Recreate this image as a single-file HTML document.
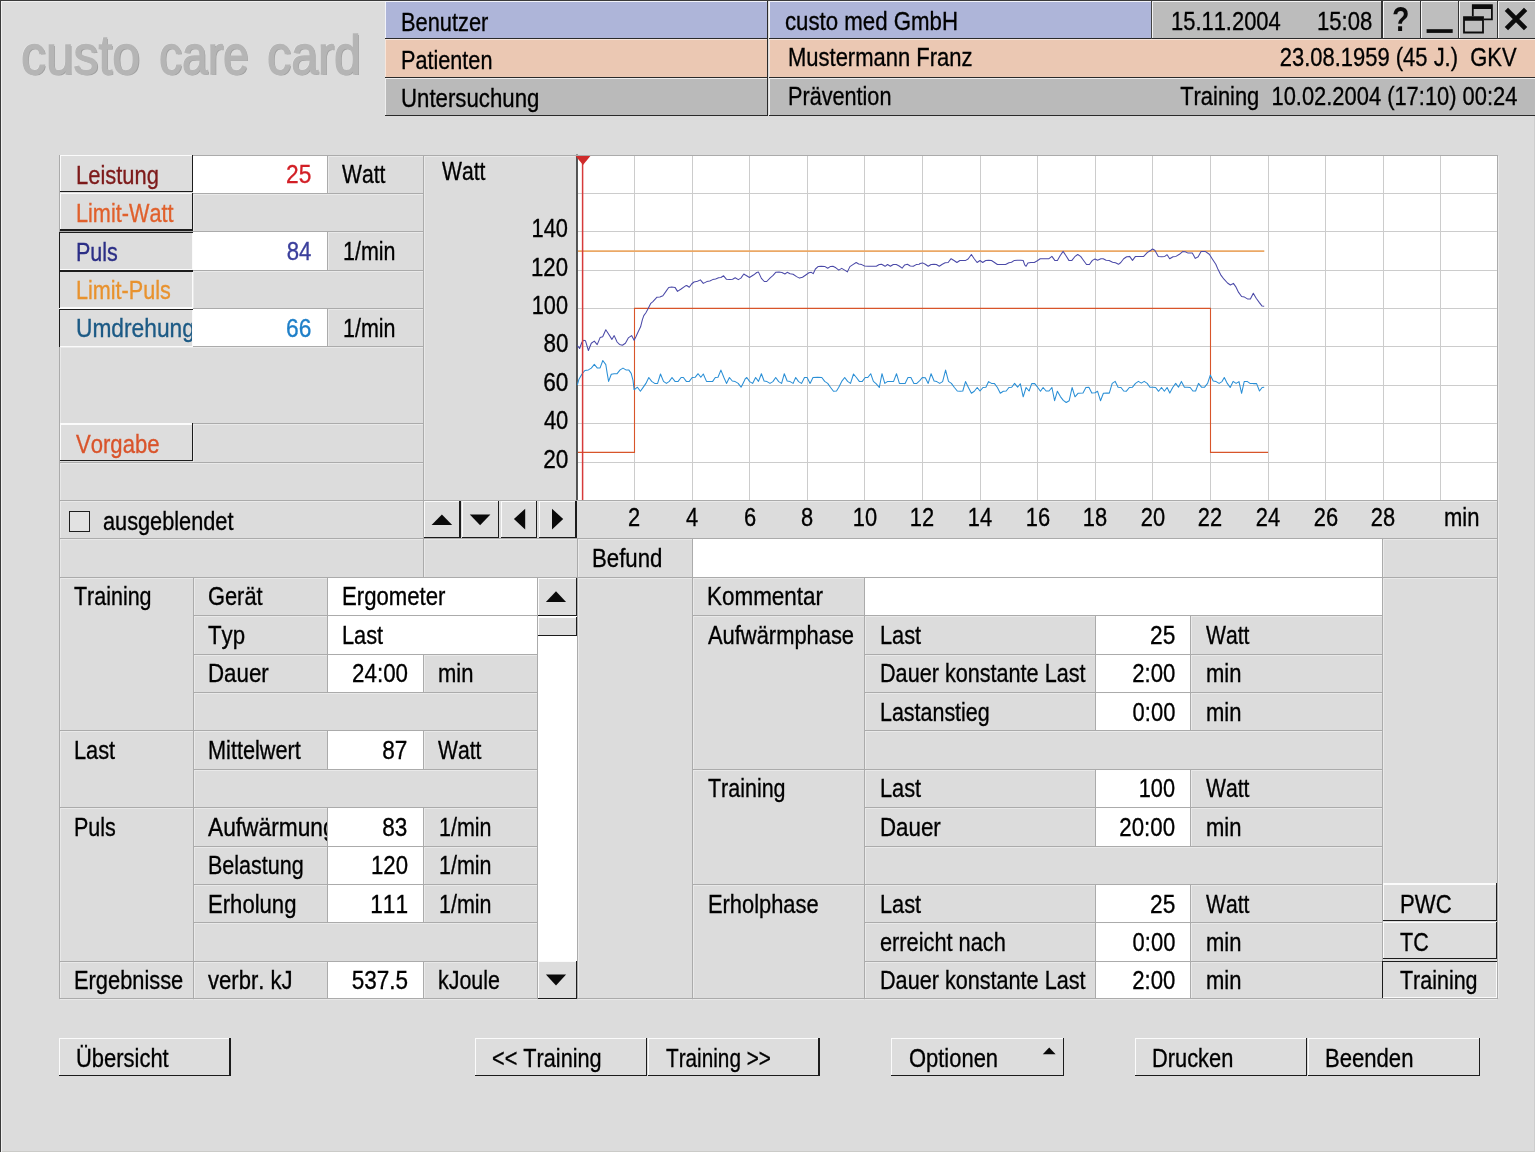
<!DOCTYPE html>
<html lang="de"><head><meta charset="utf-8"><title>custo care card</title>
<style>
html,body{margin:0;padding:0;background:#dcdcdc;}
body{width:1535px;height:1152px;overflow:hidden;position:relative;font-family:"Liberation Sans",sans-serif;}
#app{position:absolute;left:0;top:0;width:1535px;height:1152px;overflow:hidden;will-change:transform;font-kerning:none;}
#app div{position:absolute;}
#app svg{position:absolute;}
.t{position:absolute;white-space:nowrap;font-size:26.4px;line-height:30px;color:#000;-webkit-text-stroke:0.35px currentColor;transform:scaleX(0.828);transform-origin:0 50%;}
.t.r{transform-origin:100% 50%;}
.logo{position:absolute;white-space:nowrap;font-weight:normal;transform-origin:0 50%;color:#b5b5b5;-webkit-text-stroke:1.4px #b5b5b5;text-shadow:1.5px 1.2px 0 #a0a0a0,-1px -0.8px 0.6px #e6e6e6;}
</style></head>
<body><div id="app">
<div style="left:59.6px;top:155.5px;width:363.3px;height:1px;background:#e9e9e9;"></div>
<div style="left:59.6px;top:193.89px;width:363.3px;height:1px;background:#e9e9e9;"></div>
<div style="left:59.6px;top:232.28px;width:363.3px;height:1px;background:#e9e9e9;"></div>
<div style="left:59.6px;top:270.67px;width:363.3px;height:1px;background:#e9e9e9;"></div>
<div style="left:59.6px;top:309.06px;width:363.3px;height:1px;background:#e9e9e9;"></div>
<div style="left:59.6px;top:347.45px;width:363.3px;height:1px;background:#e9e9e9;"></div>
<div style="left:59.6px;top:424.23px;width:363.3px;height:1px;background:#e9e9e9;"></div>
<div style="left:59.6px;top:462.62px;width:363.3px;height:1px;background:#e9e9e9;"></div>
<div style="left:59.6px;top:501.01px;width:363.3px;height:1px;background:#e9e9e9;"></div>
<div style="left:59.6px;top:539.4px;width:363.3px;height:1px;background:#e9e9e9;"></div>
<div style="left:59.6px;top:577.79px;width:363.3px;height:1px;background:#e9e9e9;"></div>
<div style="left:423.9px;top:155.5px;width:152.7px;height:1px;background:#e9e9e9;"></div>
<div style="left:423.9px;top:501.01px;width:1073px;height:1px;background:#e9e9e9;"></div>
<div style="left:423.9px;top:539.4px;width:1073px;height:1px;background:#e9e9e9;"></div>
<div style="left:423.9px;top:577.79px;width:1073px;height:1px;background:#e9e9e9;"></div>
<div style="left:577.6px;top:155.5px;width:919.3px;height:1px;background:#e9e9e9;"></div>
<div style="left:59.6px;top:155.5px;width:1px;height:842.85px;background:#e9e9e9;"></div>
<div style="left:423.9px;top:155.5px;width:1px;height:421.29px;background:#e9e9e9;"></div>
<div style="left:577.6px;top:539.4px;width:1px;height:458.95px;background:#e9e9e9;"></div>
<div style="left:1497.9px;top:155.5px;width:1px;height:842.85px;background:#e9e9e9;"></div>
<div style="left:327.9px;top:155.5px;width:1px;height:37.39px;background:#e9e9e9;"></div>
<div style="left:327.9px;top:232.28px;width:1px;height:37.39px;background:#e9e9e9;"></div>
<div style="left:327.9px;top:309.06px;width:1px;height:37.39px;background:#e9e9e9;"></div>
<div style="left:693.2px;top:539.4px;width:1px;height:458.95px;background:#e9e9e9;"></div>
<div style="left:1382.7px;top:539.4px;width:1px;height:458.95px;background:#e9e9e9;"></div>
<div style="left:193.9px;top:577.79px;width:1px;height:420.56px;background:#e9e9e9;"></div>
<div style="left:59.6px;top:577.79px;width:133.3px;height:1px;background:#e9e9e9;"></div>
<div style="left:59.6px;top:731.35px;width:133.3px;height:1px;background:#e9e9e9;"></div>
<div style="left:59.6px;top:808.13px;width:133.3px;height:1px;background:#e9e9e9;"></div>
<div style="left:59.6px;top:961.69px;width:133.3px;height:1px;background:#e9e9e9;"></div>
<div style="left:59.6px;top:999.35px;width:133.3px;height:1px;background:#e9e9e9;"></div>
<div style="left:193.9px;top:577.79px;width:343px;height:1px;background:#e9e9e9;"></div>
<div style="left:193.9px;top:616.18px;width:343px;height:1px;background:#e9e9e9;"></div>
<div style="left:193.9px;top:654.57px;width:343px;height:1px;background:#e9e9e9;"></div>
<div style="left:193.9px;top:692.96px;width:343px;height:1px;background:#e9e9e9;"></div>
<div style="left:193.9px;top:731.35px;width:343px;height:1px;background:#e9e9e9;"></div>
<div style="left:193.9px;top:769.74px;width:343px;height:1px;background:#e9e9e9;"></div>
<div style="left:193.9px;top:808.13px;width:343px;height:1px;background:#e9e9e9;"></div>
<div style="left:193.9px;top:846.52px;width:343px;height:1px;background:#e9e9e9;"></div>
<div style="left:193.9px;top:884.91px;width:343px;height:1px;background:#e9e9e9;"></div>
<div style="left:193.9px;top:923.3px;width:343px;height:1px;background:#e9e9e9;"></div>
<div style="left:193.9px;top:961.69px;width:343px;height:1px;background:#e9e9e9;"></div>
<div style="left:193.9px;top:999.35px;width:343px;height:1px;background:#e9e9e9;"></div>
<div style="left:537.9px;top:999.35px;width:38.7px;height:1px;background:#e9e9e9;"></div>
<div style="left:327.9px;top:577.79px;width:1px;height:37.39px;background:#e9e9e9;"></div>
<div style="left:327.9px;top:616.18px;width:1px;height:37.39px;background:#e9e9e9;"></div>
<div style="left:327.9px;top:654.57px;width:1px;height:37.39px;background:#e9e9e9;"></div>
<div style="left:327.9px;top:731.35px;width:1px;height:37.39px;background:#e9e9e9;"></div>
<div style="left:327.9px;top:808.13px;width:1px;height:37.39px;background:#e9e9e9;"></div>
<div style="left:327.9px;top:846.52px;width:1px;height:37.39px;background:#e9e9e9;"></div>
<div style="left:327.9px;top:884.91px;width:1px;height:37.39px;background:#e9e9e9;"></div>
<div style="left:327.9px;top:961.69px;width:1px;height:36.66px;background:#e9e9e9;"></div>
<div style="left:423.9px;top:654.57px;width:1px;height:37.39px;background:#e9e9e9;"></div>
<div style="left:423.9px;top:731.35px;width:1px;height:37.39px;background:#e9e9e9;"></div>
<div style="left:423.9px;top:808.13px;width:1px;height:37.39px;background:#e9e9e9;"></div>
<div style="left:423.9px;top:846.52px;width:1px;height:37.39px;background:#e9e9e9;"></div>
<div style="left:423.9px;top:884.91px;width:1px;height:37.39px;background:#e9e9e9;"></div>
<div style="left:423.9px;top:961.69px;width:1px;height:36.66px;background:#e9e9e9;"></div>
<div style="left:537.9px;top:577.79px;width:1px;height:420.56px;background:#e9e9e9;"></div>
<div style="left:577.6px;top:999.35px;width:114.6px;height:1px;background:#e9e9e9;"></div>
<div style="left:865.1px;top:577.79px;width:1px;height:420.56px;background:#e9e9e9;"></div>
<div style="left:693.2px;top:577.79px;width:170.9px;height:1px;background:#e9e9e9;"></div>
<div style="left:693.2px;top:616.18px;width:170.9px;height:1px;background:#e9e9e9;"></div>
<div style="left:693.2px;top:769.74px;width:170.9px;height:1px;background:#e9e9e9;"></div>
<div style="left:693.2px;top:884.91px;width:170.9px;height:1px;background:#e9e9e9;"></div>
<div style="left:693.2px;top:999.35px;width:170.9px;height:1px;background:#e9e9e9;"></div>
<div style="left:865.1px;top:577.79px;width:516.6px;height:1px;background:#e9e9e9;"></div>
<div style="left:865.1px;top:616.18px;width:516.6px;height:1px;background:#e9e9e9;"></div>
<div style="left:865.1px;top:654.57px;width:516.6px;height:1px;background:#e9e9e9;"></div>
<div style="left:865.1px;top:692.96px;width:516.6px;height:1px;background:#e9e9e9;"></div>
<div style="left:865.1px;top:731.35px;width:516.6px;height:1px;background:#e9e9e9;"></div>
<div style="left:865.1px;top:769.74px;width:516.6px;height:1px;background:#e9e9e9;"></div>
<div style="left:865.1px;top:808.13px;width:516.6px;height:1px;background:#e9e9e9;"></div>
<div style="left:865.1px;top:846.52px;width:516.6px;height:1px;background:#e9e9e9;"></div>
<div style="left:865.1px;top:884.91px;width:516.6px;height:1px;background:#e9e9e9;"></div>
<div style="left:865.1px;top:923.3px;width:516.6px;height:1px;background:#e9e9e9;"></div>
<div style="left:865.1px;top:961.69px;width:516.6px;height:1px;background:#e9e9e9;"></div>
<div style="left:865.1px;top:999.35px;width:516.6px;height:1px;background:#e9e9e9;"></div>
<div style="left:1095.9px;top:616.18px;width:1px;height:37.39px;background:#e9e9e9;"></div>
<div style="left:1191px;top:616.18px;width:1px;height:37.39px;background:#e9e9e9;"></div>
<div style="left:1095.9px;top:654.57px;width:1px;height:37.39px;background:#e9e9e9;"></div>
<div style="left:1191px;top:654.57px;width:1px;height:37.39px;background:#e9e9e9;"></div>
<div style="left:1095.9px;top:692.96px;width:1px;height:37.39px;background:#e9e9e9;"></div>
<div style="left:1191px;top:692.96px;width:1px;height:37.39px;background:#e9e9e9;"></div>
<div style="left:1095.9px;top:769.74px;width:1px;height:37.39px;background:#e9e9e9;"></div>
<div style="left:1191px;top:769.74px;width:1px;height:37.39px;background:#e9e9e9;"></div>
<div style="left:1095.9px;top:808.13px;width:1px;height:37.39px;background:#e9e9e9;"></div>
<div style="left:1191px;top:808.13px;width:1px;height:37.39px;background:#e9e9e9;"></div>
<div style="left:1095.9px;top:884.91px;width:1px;height:37.39px;background:#e9e9e9;"></div>
<div style="left:1191px;top:884.91px;width:1px;height:37.39px;background:#e9e9e9;"></div>
<div style="left:1095.9px;top:923.3px;width:1px;height:37.39px;background:#e9e9e9;"></div>
<div style="left:1191px;top:923.3px;width:1px;height:37.39px;background:#e9e9e9;"></div>
<div style="left:1095.9px;top:961.69px;width:1px;height:36.66px;background:#e9e9e9;"></div>
<div style="left:1191px;top:961.69px;width:1px;height:36.66px;background:#e9e9e9;"></div>
<div style="left:1382.7px;top:999.35px;width:114.2px;height:1px;background:#e9e9e9;"></div>
<div style="left:193.3px;top:155.5px;width:1.2px;height:37.39px;background:#ffffff;"></div>
<div style="left:193.3px;top:193.89px;width:1.2px;height:37.39px;background:#e9e9e9;"></div>
<div style="left:193.3px;top:232.28px;width:1.2px;height:37.39px;background:#ffffff;"></div>
<div style="left:193.3px;top:270.67px;width:1.2px;height:37.39px;background:#e9e9e9;"></div>
<div style="left:193.3px;top:309.06px;width:1.2px;height:37.39px;background:#ffffff;"></div>
<div style="left:193.3px;top:424.23px;width:1.2px;height:37.39px;background:#e9e9e9;"></div>
<div style="left:193.4px;top:155px;width:134px;height:38.39px;background:#ffffff;"></div>
<div style="left:193.4px;top:231.78px;width:134px;height:38.39px;background:#ffffff;"></div>
<div style="left:193.4px;top:308.56px;width:134px;height:38.39px;background:#ffffff;"></div>
<div style="left:327.4px;top:577.29px;width:210px;height:76.78px;background:#ffffff;"></div>
<div style="left:327.4px;top:654.07px;width:96px;height:38.39px;background:#ffffff;"></div>
<div style="left:327.4px;top:730.85px;width:96px;height:38.39px;background:#ffffff;"></div>
<div style="left:327.4px;top:807.63px;width:96px;height:38.39px;background:#ffffff;"></div>
<div style="left:327.4px;top:846.02px;width:96px;height:38.39px;background:#ffffff;"></div>
<div style="left:327.4px;top:884.41px;width:96px;height:38.39px;background:#ffffff;"></div>
<div style="left:327.4px;top:961.19px;width:96px;height:37.66px;background:#ffffff;"></div>
<div style="left:537.4px;top:577.29px;width:39.7px;height:421.56px;background:#ffffff;"></div>
<div style="left:692.7px;top:538.9px;width:689.5px;height:38.39px;background:#ffffff;"></div>
<div style="left:864.6px;top:577.29px;width:517.6px;height:38.39px;background:#ffffff;"></div>
<div style="left:1095.4px;top:615.68px;width:95.1px;height:38.39px;background:#ffffff;"></div>
<div style="left:1095.4px;top:654.07px;width:95.1px;height:38.39px;background:#ffffff;"></div>
<div style="left:1095.4px;top:692.46px;width:95.1px;height:38.39px;background:#ffffff;"></div>
<div style="left:1095.4px;top:769.24px;width:95.1px;height:38.39px;background:#ffffff;"></div>
<div style="left:1095.4px;top:807.63px;width:95.1px;height:38.39px;background:#ffffff;"></div>
<div style="left:1095.4px;top:884.41px;width:95.1px;height:38.39px;background:#ffffff;"></div>
<div style="left:1095.4px;top:922.8px;width:95.1px;height:38.39px;background:#ffffff;"></div>
<div style="left:1095.4px;top:961.19px;width:95.1px;height:37.66px;background:#ffffff;"></div>
<div style="left:577.1px;top:155px;width:920.3px;height:345.51px;background:#ffffff;"></div>
<svg width="1535" height="1152" viewBox="0 0 1535 1152" style="left:0;top:0"><path d="M634.5 155.5V500.01M692.5 155.5V500.01M749.5 155.5V500.01M807.5 155.5V500.01M864.5 155.5V500.01M922.5 155.5V500.01M980.5 155.5V500.01M1037.5 155.5V500.01M1095.5 155.5V500.01M1152.5 155.5V500.01M1210.5 155.5V500.01M1268.5 155.5V500.01M1325.5 155.5V500.01M1383.5 155.5V500.01M1440.5 155.5V500.01M577.6 193.5H1496.9M577.6 231.5H1496.9M577.6 270.5H1496.9M577.6 308.5H1496.9M577.6 346.5H1496.9M577.6 385.5H1496.9M577.6 423.5H1496.9M577.6 462.5H1496.9" stroke="#cccccc" stroke-width="1" fill="none"/><path d="M577 154.5V501.01" stroke="#3a3a3a" stroke-width="1.7"/><path d="M578 251.1H1264.3" stroke="#eba866" stroke-width="1.7" fill="none"/><path d="M578 452.4H634.5V308.4H1210.5V452.4H1268.1" stroke="#d8552a" stroke-width="1.1" fill="none"/><path d="M577.3 385.1L579.0 379.2L582.0 374.0L584.9 370.5L588.4 369.9L591.3 368.1L594.3 364.4L597.2 367.9L600.1 367.9L602.8 360.5L605.8 364.6L607.2 373.4L608.6 381.4L611.3 374.3L614.2 373.7L617.1 373.7L620.1 369.9L623.0 368.1L625.9 369.9L628.9 370.1L631.2 373.4L633.0 380.4L634.1 389.8L637.4 387.2L640.4 391.3L643.5 386.9L645.9 383.4L648.8 377.5L651.7 381.4L654.7 383.4L657.6 383.4L660.5 374.0L663.5 381.4L666.4 383.4L669.3 381.4L672.0 377.5L675.0 381.4L678.1 381.4L681.1 377.5L683.4 377.5L686.3 381.4L689.3 381.4L692.2 377.5L695.1 377.3L698.1 373.7L700.8 377.3L703.3 374.0L706.5 381.4L709.4 381.4L712.7 381.4L715.3 377.5L718.0 377.3L720.9 370.1L723.9 377.5L726.5 383.4L729.4 377.5L732.3 381.0L735.2 381.6L738.2 383.4L741.1 387.2L744.0 381.6L745.0 379.2L746.8 377.5L749.7 381.6L752.6 383.4L755.6 377.5L758.5 381.4L761.4 373.7L764.1 381.0L767.0 381.6L770.0 383.4L772.9 381.6L775.7 377.5L778.7 381.6L781.6 383.4L784.3 373.7L787.2 381.0L790.1 381.6L793.1 383.4L795.7 377.5L798.6 381.6L801.5 383.4L804.5 377.5L807.1 377.5L810.1 383.4L813.0 377.5L817.7 377.3L821.8 377.5L824.7 381.4L827.7 383.4L830.6 387.5L833.5 391.3L836.5 391.0L838.8 387.2L841.7 381.4L844.7 377.5L847.6 381.4L850.5 383.4L853.5 374.0L856.4 377.5L859.3 381.4L862.3 381.4L865.2 377.5L867.8 377.5L870.7 373.7L873.4 381.4L876.3 383.9L879.3 387.5L882.0 373.7L884.8 383.4L887.7 381.4L890.6 381.4L893.6 381.4L896.5 373.7L899.4 383.4L902.4 383.4L905.1 383.4L908.0 377.5L910.9 377.5L913.9 383.4L916.8 383.4L920.0 380.4L922.3 377.5L925.3 377.8L928.2 383.4L931.1 373.7L934.1 381.0L936.8 381.6L939.7 383.4L942.6 381.6L945.6 370.1L948.5 381.4L951.4 383.4L954.4 387.5L957.3 391.0L960.2 391.2L962.8 391.0L965.5 381.6L968.4 387.5L971.4 393.3L974.3 391.2L977.2 387.5L980.0 391.0L983.0 387.5L985.9 387.2L988.6 381.6L991.5 383.4L994.5 383.6L997.4 387.5L1000.3 393.3L1003.3 391.3L1006.2 391.0L1008.9 387.5L1011.7 387.2L1014.6 383.4L1017.6 387.2L1020.3 383.7L1023.2 396.8L1026.1 387.5L1029.1 391.0L1031.7 383.6L1034.7 383.6L1037.6 387.2L1040.5 391.2L1043.1 387.5L1046.1 391.0L1049.0 391.0L1051.9 387.5L1054.6 400.7L1057.4 391.2L1060.4 396.6L1063.3 400.4L1066.2 402.5L1069.2 400.7L1072.1 387.5L1075.0 396.8L1078.0 393.3L1083.0 393.1L1085.9 387.5L1088.9 387.2L1091.8 393.1L1095.0 392.7L1097.6 391.3L1100.5 400.7L1103.4 393.3L1106.4 393.1L1109.3 393.1L1112.2 383.4L1115.2 381.4L1118.1 387.2L1121.0 387.5L1123.7 391.0L1126.4 391.2L1129.4 387.5L1132.5 387.2L1135.5 383.4L1138.4 381.4L1141.3 383.1L1144.2 381.4L1147.2 383.4L1149.9 387.2L1152.7 387.2L1155.6 387.5L1158.6 391.3L1161.5 387.5L1164.4 391.2L1167.1 387.5L1169.8 393.1L1172.7 387.5L1175.7 383.4L1178.5 387.2L1181.4 381.4L1184.4 387.2L1187.3 387.2L1190.2 387.5L1192.9 391.0L1195.6 391.0L1198.5 383.4L1201.5 387.2L1204.6 387.2L1207.6 383.4L1210.3 375.1L1213.2 381.0L1216.1 381.6L1219.1 383.4L1222.0 381.6L1224.3 377.5L1227.3 383.4L1230.2 387.5L1233.1 381.4L1236.1 383.4L1239.0 381.6L1241.6 393.3L1244.2 381.6L1247.1 381.4L1250.0 383.4L1253.3 383.6L1256.6 383.6L1259.5 391.0L1262.1 387.5L1264.2 387.2" stroke="#2a8fd6" stroke-width="1.05" fill="none" stroke-linejoin="round"/><path d="M577.3 345.5L579.6 348.5L582.0 342.0L583.7 340.3L585.5 340.8L588.4 350.5L591.3 343.2L594.3 341.1L597.2 344.6L600.1 337.6L602.7 336.7L605.8 329.7L608.4 333.8L611.9 339.4L614.2 335.6L617.1 342.0L619.5 344.4L622.4 345.2L625.4 343.2L628.3 337.9L631.6 335.6L634.1 340.3L635.9 336.7L638.3 331.5L640.6 326.8L642.4 319.7L643.8 315.6L645.9 312.7L648.2 308.6L650.8 303.3L652.9 301.6L657.0 297.2L659.9 297.1L662.9 295.7L665.8 291.6L668.7 287.5L671.7 287.1L675.0 287.4L677.5 291.4L681.1 289.0L685.2 286.1L686.7 285.5L689.3 287.3L691.6 284.0L694.0 282.0L697.5 281.3L700.4 279.9L703.3 283.4L706.8 281.6L709.8 281.0L712.7 279.6L715.6 279.0L718.6 277.8L720.9 277.5L723.6 275.8L726.5 279.3L729.7 279.6L732.6 279.3L735.2 277.8L738.3 279.6L740.9 278.1L743.8 274.0L745.0 274.8L749.5 277.5L753.8 274.8L756.7 272.5L758.5 272.1L761.4 278.4L764.3 281.5L766.7 281.5L770.2 277.8L773.1 275.4L775.7 272.3L779.0 272.1L781.9 272.5L784.9 274.0L787.2 272.3L790.1 273.7L793.1 274.2L796.6 276.6L799.5 278.1L802.5 277.2L805.4 275.2L808.9 272.8L811.3 272.3L813.2 273.7L815.4 269.0L818.3 266.4L821.2 266.3L824.7 266.4L827.7 268.2L830.6 266.4L832.9 266.3L835.9 267.8L838.8 270.1L841.7 268.4L844.7 270.1L847.4 271.9L849.9 266.6L852.9 264.6L856.2 262.5L858.7 264.0L861.7 264.6L864.6 266.0L868.1 266.3L872.8 266.3L876.3 266.3L879.3 264.5L881.6 264.3L885.1 266.3L887.5 264.5L890.4 266.3L893.3 264.5L896.3 264.5L899.2 266.0L902.1 268.2L904.7 264.9L907.4 264.3L910.3 266.0L913.3 266.3L916.2 264.6L919.1 264.3L920.0 263.5L922.6 262.9L925.3 264.3L928.2 266.3L931.1 264.5L934.1 264.3L936.4 264.5L939.3 266.3L942.3 264.3L945.2 262.8L948.1 262.5L951.1 258.7L954.0 260.5L956.9 262.5L959.9 260.5L962.8 260.4L965.7 260.4L968.1 259.0L971.4 254.5L974.2 258.7L977.1 262.5L980.0 260.5L982.7 262.5L985.7 260.5L988.6 260.2L991.5 260.5L994.5 262.5L997.4 264.5L1002.1 264.5L1005.6 264.5L1008.9 262.8L1011.5 262.3L1014.4 260.4L1017.3 260.2L1020.8 260.2L1023.2 260.5L1024.7 264.9L1026.1 266.3L1027.9 263.1L1030.8 262.5L1034.3 262.5L1037.3 260.8L1040.2 258.8L1044.3 258.7L1049.0 258.7L1051.9 256.4L1054.8 260.4L1057.4 260.4L1060.1 255.7L1063.1 251.4L1066.0 255.7L1068.9 260.4L1071.9 260.4L1074.8 256.7L1077.7 254.5L1080.6 256.4L1083.6 260.5L1086.5 264.5L1089.4 264.5L1092.4 260.4L1095.0 259.0L1097.6 260.2L1100.9 258.7L1103.2 258.7L1106.1 260.2L1109.1 260.5L1112.6 262.3L1115.5 262.8L1118.5 264.3L1120.8 262.5L1123.7 258.7L1126.7 256.7L1129.6 256.4L1132.5 260.4L1135.5 256.4L1139.6 256.4L1143.7 256.4L1147.2 252.6L1150.1 250.8L1152.5 249.0L1154.8 250.2L1158.3 256.4L1161.8 256.7L1164.8 256.4L1167.1 254.7L1169.7 258.7L1173.0 256.7L1175.9 256.4L1179.4 254.3L1182.9 251.4L1185.3 251.7L1187.6 252.9L1192.3 252.9L1195.3 258.4L1198.2 256.7L1201.1 251.4L1205.2 251.4L1209.3 254.3L1212.3 259.0L1215.8 264.3L1218.1 269.6L1221.1 275.4L1224.0 279.2L1227.5 283.0L1230.4 285.0L1233.4 283.4L1235.7 286.6L1238.6 292.4L1241.6 296.5L1244.5 297.1L1247.4 298.9L1250.4 298.9L1253.3 293.2L1256.2 298.3L1259.2 302.4L1262.1 306.1L1264.2 306.3" stroke="#4b4aa8" stroke-width="1.05" fill="none" stroke-linejoin="round"/><path d="M582.6 155.5V500.01" stroke="#d63a3a" stroke-width="1.5"/><polygon points="575.2,155.5 590.8,155.5 583,164.9" fill="#cf2b2b"/></svg>
<div style="left:58.6px;top:154.5px;width:365.3px;height:1px;background:#ababab;"></div>
<div style="left:58.6px;top:192.89px;width:365.3px;height:1px;background:#ababab;"></div>
<div style="left:58.6px;top:231.28px;width:365.3px;height:1px;background:#ababab;"></div>
<div style="left:58.6px;top:269.67px;width:365.3px;height:1px;background:#ababab;"></div>
<div style="left:58.6px;top:308.06px;width:365.3px;height:1px;background:#ababab;"></div>
<div style="left:58.6px;top:346.45px;width:365.3px;height:1px;background:#ababab;"></div>
<div style="left:58.6px;top:423.23px;width:365.3px;height:1px;background:#ababab;"></div>
<div style="left:58.6px;top:461.62px;width:365.3px;height:1px;background:#ababab;"></div>
<div style="left:58.6px;top:500.01px;width:365.3px;height:1px;background:#ababab;"></div>
<div style="left:58.6px;top:538.4px;width:365.3px;height:1px;background:#ababab;"></div>
<div style="left:58.6px;top:576.79px;width:365.3px;height:1px;background:#ababab;"></div>
<div style="left:422.9px;top:154.5px;width:154.7px;height:1px;background:#ababab;"></div>
<div style="left:422.9px;top:500.01px;width:1075px;height:1px;background:#ababab;"></div>
<div style="left:422.9px;top:538.4px;width:1075px;height:1px;background:#ababab;"></div>
<div style="left:422.9px;top:576.79px;width:1075px;height:1px;background:#ababab;"></div>
<div style="left:576.6px;top:154.5px;width:921.3px;height:1px;background:#ababab;"></div>
<div style="left:58.6px;top:154.5px;width:1px;height:844.85px;background:#ababab;"></div>
<div style="left:422.9px;top:154.5px;width:1px;height:423.29px;background:#ababab;"></div>
<div style="left:576.6px;top:538.4px;width:1px;height:460.95px;background:#ababab;"></div>
<div style="left:1496.9px;top:154.5px;width:1px;height:844.85px;background:#ababab;"></div>
<div style="left:326.9px;top:154.5px;width:1px;height:39.39px;background:#ababab;"></div>
<div style="left:326.9px;top:231.28px;width:1px;height:39.39px;background:#ababab;"></div>
<div style="left:326.9px;top:308.06px;width:1px;height:39.39px;background:#ababab;"></div>
<div style="left:692.2px;top:538.4px;width:1px;height:460.95px;background:#ababab;"></div>
<div style="left:1381.7px;top:538.4px;width:1px;height:460.95px;background:#ababab;"></div>
<div style="left:192.9px;top:576.79px;width:1px;height:422.56px;background:#ababab;"></div>
<div style="left:58.6px;top:576.79px;width:135.3px;height:1px;background:#ababab;"></div>
<div style="left:58.6px;top:730.35px;width:135.3px;height:1px;background:#ababab;"></div>
<div style="left:58.6px;top:807.13px;width:135.3px;height:1px;background:#ababab;"></div>
<div style="left:58.6px;top:960.69px;width:135.3px;height:1px;background:#ababab;"></div>
<div style="left:58.6px;top:998.35px;width:135.3px;height:1px;background:#ababab;"></div>
<div style="left:192.9px;top:576.79px;width:345px;height:1px;background:#ababab;"></div>
<div style="left:192.9px;top:615.18px;width:345px;height:1px;background:#ababab;"></div>
<div style="left:192.9px;top:653.57px;width:345px;height:1px;background:#ababab;"></div>
<div style="left:192.9px;top:691.96px;width:345px;height:1px;background:#ababab;"></div>
<div style="left:192.9px;top:730.35px;width:345px;height:1px;background:#ababab;"></div>
<div style="left:192.9px;top:768.74px;width:345px;height:1px;background:#ababab;"></div>
<div style="left:192.9px;top:807.13px;width:345px;height:1px;background:#ababab;"></div>
<div style="left:192.9px;top:845.52px;width:345px;height:1px;background:#ababab;"></div>
<div style="left:192.9px;top:883.91px;width:345px;height:1px;background:#ababab;"></div>
<div style="left:192.9px;top:922.3px;width:345px;height:1px;background:#ababab;"></div>
<div style="left:192.9px;top:960.69px;width:345px;height:1px;background:#ababab;"></div>
<div style="left:192.9px;top:998.35px;width:345px;height:1px;background:#ababab;"></div>
<div style="left:536.9px;top:998.35px;width:40.7px;height:1px;background:#ababab;"></div>
<div style="left:326.9px;top:576.79px;width:1px;height:39.39px;background:#ababab;"></div>
<div style="left:326.9px;top:615.18px;width:1px;height:39.39px;background:#ababab;"></div>
<div style="left:326.9px;top:653.57px;width:1px;height:39.39px;background:#ababab;"></div>
<div style="left:326.9px;top:730.35px;width:1px;height:39.39px;background:#ababab;"></div>
<div style="left:326.9px;top:807.13px;width:1px;height:39.39px;background:#ababab;"></div>
<div style="left:326.9px;top:845.52px;width:1px;height:39.39px;background:#ababab;"></div>
<div style="left:326.9px;top:883.91px;width:1px;height:39.39px;background:#ababab;"></div>
<div style="left:326.9px;top:960.69px;width:1px;height:38.66px;background:#ababab;"></div>
<div style="left:422.9px;top:653.57px;width:1px;height:39.39px;background:#ababab;"></div>
<div style="left:422.9px;top:730.35px;width:1px;height:39.39px;background:#ababab;"></div>
<div style="left:422.9px;top:807.13px;width:1px;height:39.39px;background:#ababab;"></div>
<div style="left:422.9px;top:845.52px;width:1px;height:39.39px;background:#ababab;"></div>
<div style="left:422.9px;top:883.91px;width:1px;height:39.39px;background:#ababab;"></div>
<div style="left:422.9px;top:960.69px;width:1px;height:38.66px;background:#ababab;"></div>
<div style="left:536.9px;top:576.79px;width:1px;height:422.56px;background:#ababab;"></div>
<div style="left:576.6px;top:998.35px;width:116.6px;height:1px;background:#ababab;"></div>
<div style="left:864.1px;top:576.79px;width:1px;height:422.56px;background:#ababab;"></div>
<div style="left:692.2px;top:576.79px;width:172.9px;height:1px;background:#ababab;"></div>
<div style="left:692.2px;top:615.18px;width:172.9px;height:1px;background:#ababab;"></div>
<div style="left:692.2px;top:768.74px;width:172.9px;height:1px;background:#ababab;"></div>
<div style="left:692.2px;top:883.91px;width:172.9px;height:1px;background:#ababab;"></div>
<div style="left:692.2px;top:998.35px;width:172.9px;height:1px;background:#ababab;"></div>
<div style="left:864.1px;top:576.79px;width:518.6px;height:1px;background:#ababab;"></div>
<div style="left:864.1px;top:615.18px;width:518.6px;height:1px;background:#ababab;"></div>
<div style="left:864.1px;top:653.57px;width:518.6px;height:1px;background:#ababab;"></div>
<div style="left:864.1px;top:691.96px;width:518.6px;height:1px;background:#ababab;"></div>
<div style="left:864.1px;top:730.35px;width:518.6px;height:1px;background:#ababab;"></div>
<div style="left:864.1px;top:768.74px;width:518.6px;height:1px;background:#ababab;"></div>
<div style="left:864.1px;top:807.13px;width:518.6px;height:1px;background:#ababab;"></div>
<div style="left:864.1px;top:845.52px;width:518.6px;height:1px;background:#ababab;"></div>
<div style="left:864.1px;top:883.91px;width:518.6px;height:1px;background:#ababab;"></div>
<div style="left:864.1px;top:922.3px;width:518.6px;height:1px;background:#ababab;"></div>
<div style="left:864.1px;top:960.69px;width:518.6px;height:1px;background:#ababab;"></div>
<div style="left:864.1px;top:998.35px;width:518.6px;height:1px;background:#ababab;"></div>
<div style="left:1094.9px;top:615.18px;width:1px;height:39.39px;background:#ababab;"></div>
<div style="left:1190px;top:615.18px;width:1px;height:39.39px;background:#ababab;"></div>
<div style="left:1094.9px;top:653.57px;width:1px;height:39.39px;background:#ababab;"></div>
<div style="left:1190px;top:653.57px;width:1px;height:39.39px;background:#ababab;"></div>
<div style="left:1094.9px;top:691.96px;width:1px;height:39.39px;background:#ababab;"></div>
<div style="left:1190px;top:691.96px;width:1px;height:39.39px;background:#ababab;"></div>
<div style="left:1094.9px;top:768.74px;width:1px;height:39.39px;background:#ababab;"></div>
<div style="left:1190px;top:768.74px;width:1px;height:39.39px;background:#ababab;"></div>
<div style="left:1094.9px;top:807.13px;width:1px;height:39.39px;background:#ababab;"></div>
<div style="left:1190px;top:807.13px;width:1px;height:39.39px;background:#ababab;"></div>
<div style="left:1094.9px;top:883.91px;width:1px;height:39.39px;background:#ababab;"></div>
<div style="left:1190px;top:883.91px;width:1px;height:39.39px;background:#ababab;"></div>
<div style="left:1094.9px;top:922.3px;width:1px;height:39.39px;background:#ababab;"></div>
<div style="left:1190px;top:922.3px;width:1px;height:39.39px;background:#ababab;"></div>
<div style="left:1094.9px;top:960.69px;width:1px;height:38.66px;background:#ababab;"></div>
<div style="left:1190px;top:960.69px;width:1px;height:38.66px;background:#ababab;"></div>
<div style="left:1381.7px;top:998.35px;width:116.2px;height:1px;background:#ababab;"></div>
<div style="left:384.8px;top:1.1px;width:383.2px;height:36.8px;background:#aeb5d9;"></div>
<div style="left:384.8px;top:1.1px;width:383.2px;height:1px;background:#f2f3fa;"></div>
<div style="left:384.8px;top:1.1px;width:1.2px;height:36.8px;background:#f2f3fa;"></div>
<div style="left:384.8px;top:37.9px;width:383.2px;height:1.25px;background:#2a2a2a;"></div>
<div style="left:767.2px;top:1.1px;width:1.3px;height:38.05px;background:#2a2a2a;"></div>
<div style="left:768.5px;top:1.1px;width:766.5px;height:36.8px;background:#aeb5d9;"></div>
<div style="left:768.5px;top:1.1px;width:766.5px;height:1px;background:#f2f3fa;"></div>
<div style="left:768.5px;top:1.1px;width:1.2px;height:36.8px;background:#f2f3fa;"></div>
<div style="left:768.5px;top:37.9px;width:766.5px;height:1.25px;background:#2a2a2a;"></div>
<div style="left:384.8px;top:39.3px;width:383.2px;height:37.55px;background:#ebc8b3;"></div>
<div style="left:384.8px;top:39.3px;width:383.2px;height:1px;background:#f7e6dc;"></div>
<div style="left:384.8px;top:39.3px;width:1.2px;height:37.55px;background:#f7e6dc;"></div>
<div style="left:384.8px;top:76.85px;width:383.2px;height:1.25px;background:#2a2a2a;"></div>
<div style="left:767.2px;top:39.3px;width:1.3px;height:38.8px;background:#2a2a2a;"></div>
<div style="left:768.5px;top:39.3px;width:766.5px;height:37.55px;background:#ebc8b3;"></div>
<div style="left:768.5px;top:39.3px;width:766.5px;height:1px;background:#f7e6dc;"></div>
<div style="left:768.5px;top:39.3px;width:1.2px;height:37.55px;background:#f7e6dc;"></div>
<div style="left:768.5px;top:76.85px;width:766.5px;height:1.25px;background:#2a2a2a;"></div>
<div style="left:384.8px;top:78.2px;width:383.2px;height:36.6px;background:#bababa;"></div>
<div style="left:384.8px;top:78.2px;width:383.2px;height:1px;background:#eeeeee;"></div>
<div style="left:384.8px;top:78.2px;width:1.2px;height:36.6px;background:#eeeeee;"></div>
<div style="left:384.8px;top:114.8px;width:383.2px;height:1.25px;background:#2a2a2a;"></div>
<div style="left:767.2px;top:78.2px;width:1.3px;height:37.85px;background:#2a2a2a;"></div>
<div style="left:768.5px;top:78.2px;width:766.5px;height:36.6px;background:#bababa;"></div>
<div style="left:768.5px;top:78.2px;width:766.5px;height:1px;background:#eeeeee;"></div>
<div style="left:768.5px;top:78.2px;width:1.2px;height:36.6px;background:#eeeeee;"></div>
<div style="left:768.5px;top:114.8px;width:766.5px;height:1.25px;background:#2a2a2a;"></div>
<div style="left:1152px;top:1.1px;width:230px;height:36.8px;background:#bcbcbc;"></div>
<div style="left:1152px;top:1.1px;width:230px;height:1px;background:#f4f4f4;"></div>
<div style="left:1152px;top:1.1px;width:1.2px;height:36.8px;background:#f4f4f4;"></div>
<div style="left:1152px;top:37.9px;width:230px;height:1.25px;background:#2a2a2a;"></div>
<div style="left:1150.8px;top:1.1px;width:1.2px;height:38.1px;background:#444;"></div>
<div style="left:1382.5px;top:1.1px;width:37.5px;height:36.8px;background:#bebebe;"></div>
<div style="left:1382.5px;top:1.1px;width:37.5px;height:1px;background:#f4f4f4;"></div>
<div style="left:1382.5px;top:1.1px;width:1.2px;height:36.8px;background:#f4f4f4;"></div>
<div style="left:1382.5px;top:37.9px;width:37.5px;height:1.25px;background:#2a2a2a;"></div>
<div style="left:1381.3px;top:1.1px;width:1.3px;height:38.1px;background:#333;"></div>
<div style="left:1421.2px;top:1.1px;width:36.7px;height:36.8px;background:#bebebe;"></div>
<div style="left:1421.2px;top:1.1px;width:36.7px;height:1px;background:#f4f4f4;"></div>
<div style="left:1421.2px;top:1.1px;width:1.2px;height:36.8px;background:#f4f4f4;"></div>
<div style="left:1421.2px;top:37.9px;width:36.7px;height:1.25px;background:#2a2a2a;"></div>
<div style="left:1420px;top:1.1px;width:1.3px;height:38.1px;background:#333;"></div>
<div style="left:1459.1px;top:1.1px;width:37.5px;height:36.8px;background:#bebebe;"></div>
<div style="left:1459.1px;top:1.1px;width:37.5px;height:1px;background:#f4f4f4;"></div>
<div style="left:1459.1px;top:1.1px;width:1.2px;height:36.8px;background:#f4f4f4;"></div>
<div style="left:1459.1px;top:37.9px;width:37.5px;height:1.25px;background:#2a2a2a;"></div>
<div style="left:1457.9px;top:1.1px;width:1.3px;height:38.1px;background:#333;"></div>
<div style="left:1497.8px;top:1.1px;width:37.2px;height:36.8px;background:#bebebe;"></div>
<div style="left:1497.8px;top:1.1px;width:37.2px;height:1px;background:#f4f4f4;"></div>
<div style="left:1497.8px;top:1.1px;width:1.2px;height:36.8px;background:#f4f4f4;"></div>
<div style="left:1497.8px;top:37.9px;width:37.2px;height:1.25px;background:#2a2a2a;"></div>
<div style="left:1496.6px;top:1.1px;width:1.3px;height:38.1px;background:#333;"></div>
<span class="t" style="top:6.65px;transform:scaleX(0.8265);left:401.40px;">Benutzer</span>
<span class="t" style="top:44.85px;transform:scaleX(0.8198);left:401.40px;">Patienten</span>
<span class="t" style="top:82.75px;transform:scaleX(0.8422);left:401.40px;">Untersuchung</span>
<span class="t" style="top:6.45px;transform:scaleX(0.8426);left:785.20px;">custo med GmbH</span>
<span class="t" style="top:42.45px;transform:scaleX(0.8328);left:787.80px;">Mustermann Franz</span>
<span class="t" style="top:80.75px;transform:scaleX(0.8197);left:787.80px;">Prävention</span>
<span class="t" style="top:6.45px;transform:scaleX(0.8306);left:1171.00px;">15.11.2004</span>
<span class="t" style="top:6.45px;transform:scaleX(0.8371);left:1317.00px;">15:08</span>
<span class="t r" style="top:42.45px;transform:scaleX(0.8321);right:18.00px;">23.08.1959 (45 J.)  GKV</span>
<span class="t r" style="top:80.75px;transform:scaleX(0.8298);right:18.00px;">Training  10.02.2004 (17:10) 00:24</span>
<svg width="1535" height="1152" viewBox="0 0 1535 1152" style="left:0;top:0"><text x="0" y="31.2" font-family="Liberation Sans, sans-serif" font-weight="bold" font-size="36" text-anchor="middle" fill="#0c0c0c" transform="translate(1400.6 0) scale(.79 1)">?</text><rect x="1426.6" y="29.2" width="26.1" height="3.7" fill="#0c0c0c"/><path fill="#0c0c0c" fill-rule="evenodd" d="M1471.9 4.2H1492.8V20.3H1483.9V18.5H1491V8.9H1473.7V16.2H1471.9Z"/><path fill="#0c0c0c" fill-rule="evenodd" d="M1463.1 16.2H1483.9V33.4H1463.1ZM1464.9 20.8V31.6H1482.1V20.8Z"/><path d="M1506.4 9.4L1525.6 28.6M1525.6 9.4L1506.4 28.6" stroke="#0c0c0c" stroke-width="4.7" fill="none"/></svg>
<span class="logo" style="left:20.60px;top:21.60px;font-size:56px;line-height:66px;transform:scaleX(0.8890)">custo</span>
<span class="logo" style="left:158.90px;top:21.60px;font-size:56px;line-height:66px;transform:scaleX(0.8240)">care</span>
<span class="logo" style="left:267.20px;top:21.60px;font-size:56px;line-height:66px;transform:scaleX(0.8620)">card</span>
<div style="left:59.5px;top:155.2px;width:133.6px;height:37.19px;background:#dddddd;"></div>
<div style="left:59.5px;top:155.2px;width:133.6px;height:1.1px;background:#fbfbfb;"></div>
<div style="left:59.5px;top:155.2px;width:1.1px;height:37.19px;background:#fbfbfb;"></div>
<div style="left:59.5px;top:191.09px;width:133.6px;height:1.3px;background:#1c1c1c;"></div>
<div style="left:191.8px;top:155.2px;width:1.3px;height:37.19px;background:#1c1c1c;"></div>
<div style="left:60.60px;top:156.50px;width:131.00px;height:35.39px;overflow:hidden"><span class="t" style="left:15.80px;top:3.35px;color:#7d1a1a;transform:scaleX(0.8305)">Leistung</span></div>
<div style="left:59.5px;top:193.09px;width:133.6px;height:37.69px;background:#dddddd;"></div>
<div style="left:59.5px;top:193.09px;width:133.6px;height:1.1px;background:#fbfbfb;"></div>
<div style="left:59.5px;top:193.09px;width:1.1px;height:37.69px;background:#fbfbfb;"></div>
<div style="left:59.5px;top:229.48px;width:133.6px;height:1.3px;background:#1c1c1c;"></div>
<div style="left:191.8px;top:193.09px;width:1.3px;height:37.69px;background:#1c1c1c;"></div>
<div style="left:60.60px;top:194.89px;width:131.00px;height:35.39px;overflow:hidden"><span class="t" style="left:15.80px;top:3.35px;color:#e0602c;transform:scaleX(0.8208)">Limit-Watt</span></div>
<div style="left:58.9px;top:231.98px;width:134.4px;height:37.99px;background:#dddddd;"></div>
<div style="left:58.9px;top:268.97px;width:134.4px;height:1.2px;background:#fbfbfb;"></div>
<div style="left:192.3px;top:231.98px;width:1.2px;height:37.99px;background:#fbfbfb;"></div>
<div style="left:58.9px;top:231.98px;width:134.4px;height:1.3px;background:#1c1c1c;"></div>
<div style="left:58.9px;top:231.98px;width:1.3px;height:37.99px;background:#1c1c1c;"></div>
<div style="left:60.60px;top:233.28px;width:131.00px;height:35.39px;overflow:hidden"><span class="t" style="left:15.80px;top:3.35px;color:#2b2e86;transform:scaleX(0.8158)">Puls</span></div>
<div style="left:58.9px;top:270.37px;width:134.4px;height:37.99px;background:#dddddd;"></div>
<div style="left:58.9px;top:307.36px;width:134.4px;height:1.2px;background:#fbfbfb;"></div>
<div style="left:192.3px;top:270.37px;width:1.2px;height:37.99px;background:#fbfbfb;"></div>
<div style="left:58.9px;top:270.37px;width:134.4px;height:1.3px;background:#1c1c1c;"></div>
<div style="left:58.9px;top:270.37px;width:1.3px;height:37.99px;background:#1c1c1c;"></div>
<div style="left:60.60px;top:271.67px;width:131.00px;height:35.39px;overflow:hidden"><span class="t" style="left:15.80px;top:3.35px;color:#e8922e;transform:scaleX(0.8179)">Limit-Puls</span></div>
<div style="left:58.9px;top:308.76px;width:134.4px;height:37.99px;background:#dddddd;"></div>
<div style="left:58.9px;top:345.75px;width:134.4px;height:1.2px;background:#fbfbfb;"></div>
<div style="left:192.3px;top:308.76px;width:1.2px;height:37.99px;background:#fbfbfb;"></div>
<div style="left:58.9px;top:308.76px;width:134.4px;height:1.3px;background:#1c1c1c;"></div>
<div style="left:58.9px;top:308.76px;width:1.3px;height:37.99px;background:#1c1c1c;"></div>
<div style="left:60.60px;top:310.06px;width:131.00px;height:35.39px;overflow:hidden"><span class="t" style="left:15.80px;top:3.35px;color:#1c5a85;transform:scaleX(0.8617)">Umdrehung</span></div>
<div style="left:59.5px;top:423.43px;width:133.6px;height:37.69px;background:#dddddd;"></div>
<div style="left:59.5px;top:423.43px;width:133.6px;height:1.1px;background:#fbfbfb;"></div>
<div style="left:59.5px;top:423.43px;width:1.1px;height:37.69px;background:#fbfbfb;"></div>
<div style="left:59.5px;top:459.82px;width:133.6px;height:1.3px;background:#1c1c1c;"></div>
<div style="left:191.8px;top:423.43px;width:1.3px;height:37.69px;background:#1c1c1c;"></div>
<div style="left:60.60px;top:425.23px;width:131.00px;height:35.39px;overflow:hidden"><span class="t" style="left:15.80px;top:3.35px;color:#d9542b;transform:scaleX(0.8368)">Vorgabe</span></div>
<span class="t r" style="top:159.15px;color:#d21f26;transform:scaleX(0.8615);right:1223.30px;">25</span>
<span class="t" style="top:159.15px;transform:scaleX(0.8012);left:341.50px;">Watt</span>
<span class="t r" style="top:235.93px;color:#3b3f9c;transform:scaleX(0.8411);right:1223.30px;">84</span>
<span class="t" style="top:235.93px;transform:scaleX(0.8136);left:342.50px;">1/min</span>
<span class="t r" style="top:312.71px;color:#1e7fc8;transform:scaleX(0.8615);right:1223.30px;">66</span>
<span class="t" style="top:312.71px;transform:scaleX(0.8136);left:342.50px;">1/min</span>
<div style="left:68.9px;top:510.8px;width:20.8px;height:20.9px;background:#e2e2e2;border:1.25px solid #1e1e1e;box-sizing:border-box"></div>
<span class="t" style="top:505.75px;transform:scaleX(0.8231);left:103.20px;">ausgeblendet</span>
<span class="t" style="top:156.35px;transform:scaleX(0.8012);left:442.00px;">Watt</span>
<span class="t r" style="top:443.66px;transform:scaleX(0.8574);right:966.80px;">20</span>
<span class="t r" style="top:405.26px;transform:scaleX(0.8333);right:966.80px;">40</span>
<span class="t r" style="top:366.86px;transform:scaleX(0.8574);right:966.80px;">60</span>
<span class="t r" style="top:328.46px;transform:scaleX(0.8492);right:966.80px;">80</span>
<span class="t r" style="top:290.06px;transform:scaleX(0.8236);right:966.80px;">100</span>
<span class="t r" style="top:251.66px;transform:scaleX(0.8405);right:966.80px;">120</span>
<span class="t r" style="top:213.26px;transform:scaleX(0.8285);right:966.80px;">140</span>
<span class="t" style="left:594.30px;width:80px;text-align:center;top:501.66px;transform-origin:50% 50%">2</span>
<span class="t" style="left:651.90px;width:80px;text-align:center;top:501.66px;transform-origin:50% 50%">4</span>
<span class="t" style="left:709.50px;width:80px;text-align:center;top:501.66px;transform-origin:50% 50%">6</span>
<span class="t" style="left:767.10px;width:80px;text-align:center;top:501.66px;transform-origin:50% 50%">8</span>
<span class="t" style="left:824.70px;width:80px;text-align:center;top:501.66px;transform-origin:50% 50%">10</span>
<span class="t" style="left:882.30px;width:80px;text-align:center;top:501.66px;transform-origin:50% 50%">12</span>
<span class="t" style="left:939.90px;width:80px;text-align:center;top:501.66px;transform-origin:50% 50%">14</span>
<span class="t" style="left:997.50px;width:80px;text-align:center;top:501.66px;transform-origin:50% 50%">16</span>
<span class="t" style="left:1055.10px;width:80px;text-align:center;top:501.66px;transform-origin:50% 50%">18</span>
<span class="t" style="left:1112.70px;width:80px;text-align:center;top:501.66px;transform-origin:50% 50%">20</span>
<span class="t" style="left:1170.30px;width:80px;text-align:center;top:501.66px;transform-origin:50% 50%">22</span>
<span class="t" style="left:1227.90px;width:80px;text-align:center;top:501.66px;transform-origin:50% 50%">24</span>
<span class="t" style="left:1285.50px;width:80px;text-align:center;top:501.66px;transform-origin:50% 50%">26</span>
<span class="t" style="left:1343.10px;width:80px;text-align:center;top:501.66px;transform-origin:50% 50%">28</span>
<span class="t" style="top:501.66px;transform:scaleX(0.8343);left:1443.50px;">min</span>
<div style="left:423.8px;top:500.71px;width:36.9px;height:37.49px;background:#dddddd;"></div>
<div style="left:423.8px;top:500.71px;width:36.9px;height:1.1px;background:#fbfbfb;"></div>
<div style="left:423.8px;top:500.71px;width:1.1px;height:37.49px;background:#fbfbfb;"></div>
<div style="left:423.8px;top:536.9px;width:36.9px;height:1.3px;background:#1c1c1c;"></div>
<div style="left:459.4px;top:500.71px;width:1.3px;height:37.49px;background:#1c1c1c;"></div>
<div style="left:461.8px;top:500.71px;width:37.7px;height:37.49px;background:#dddddd;"></div>
<div style="left:461.8px;top:500.71px;width:37.7px;height:1.1px;background:#fbfbfb;"></div>
<div style="left:461.8px;top:500.71px;width:1.1px;height:37.49px;background:#fbfbfb;"></div>
<div style="left:461.8px;top:536.9px;width:37.7px;height:1.3px;background:#1c1c1c;"></div>
<div style="left:498.2px;top:500.71px;width:1.3px;height:37.49px;background:#1c1c1c;"></div>
<div style="left:500.6px;top:500.71px;width:36.9px;height:37.49px;background:#dddddd;"></div>
<div style="left:500.6px;top:500.71px;width:36.9px;height:1.1px;background:#fbfbfb;"></div>
<div style="left:500.6px;top:500.71px;width:1.1px;height:37.49px;background:#fbfbfb;"></div>
<div style="left:500.6px;top:536.9px;width:36.9px;height:1.3px;background:#1c1c1c;"></div>
<div style="left:536.2px;top:500.71px;width:1.3px;height:37.49px;background:#1c1c1c;"></div>
<div style="left:538.6px;top:500.71px;width:38.1px;height:37.49px;background:#dddddd;"></div>
<div style="left:538.6px;top:500.71px;width:38.1px;height:1.1px;background:#fbfbfb;"></div>
<div style="left:538.6px;top:500.71px;width:1.1px;height:37.49px;background:#fbfbfb;"></div>
<div style="left:538.6px;top:536.9px;width:38.1px;height:1.3px;background:#1c1c1c;"></div>
<div style="left:575.4px;top:500.71px;width:1.3px;height:37.49px;background:#1c1c1c;"></div>
<div style="left:537.6px;top:578.2px;width:39.3px;height:38.1px;background:#dddddd;"></div>
<div style="left:537.6px;top:578.2px;width:39.3px;height:1.1px;background:#fbfbfb;"></div>
<div style="left:537.6px;top:578.2px;width:1.1px;height:38.1px;background:#fbfbfb;"></div>
<div style="left:537.6px;top:615px;width:39.3px;height:1.3px;background:#1c1c1c;"></div>
<div style="left:575.6px;top:578.2px;width:1.3px;height:38.1px;background:#1c1c1c;"></div>
<div style="left:537.6px;top:617px;width:39.3px;height:19.1px;background:#dddddd;"></div>
<div style="left:537.6px;top:617px;width:39.3px;height:1.1px;background:#fbfbfb;"></div>
<div style="left:537.6px;top:617px;width:1.1px;height:19.1px;background:#fbfbfb;"></div>
<div style="left:537.6px;top:634.8px;width:39.3px;height:1.3px;background:#1c1c1c;"></div>
<div style="left:575.6px;top:617px;width:1.3px;height:19.1px;background:#1c1c1c;"></div>
<div style="left:537.6px;top:961.09px;width:39.3px;height:38.06px;background:#dddddd;"></div>
<div style="left:537.6px;top:961.09px;width:39.3px;height:1.1px;background:#fbfbfb;"></div>
<div style="left:537.6px;top:961.09px;width:1.1px;height:38.06px;background:#fbfbfb;"></div>
<div style="left:537.6px;top:997.85px;width:39.3px;height:1.3px;background:#1c1c1c;"></div>
<div style="left:575.6px;top:961.09px;width:1.3px;height:38.06px;background:#1c1c1c;"></div>
<span class="t" style="top:542.75px;transform:scaleX(0.8414);left:591.90px;">Befund</span>
<span class="t" style="top:581.44px;transform:scaleX(0.813);left:74.40px;">Training</span>
<span class="t" style="top:735.00px;transform:scaleX(0.825);left:74.40px;">Last</span>
<span class="t" style="top:811.78px;transform:scaleX(0.8158);left:74.40px;">Puls</span>
<span class="t" style="top:965.34px;transform:scaleX(0.8275);left:74.40px;">Ergebnisse</span>
<div style="left:194.90px;top:578.79px;width:132.40px;height:36.39px;overflow:hidden"><span class="t" style="left:13.6px;top:2.65px;transform:scaleX(0.8273)">Gerät</span></div>
<div style="left:194.90px;top:617.18px;width:132.40px;height:36.39px;overflow:hidden"><span class="t" style="left:13.6px;top:2.65px;transform:scaleX(0.8432)">Typ</span></div>
<div style="left:194.90px;top:655.57px;width:132.40px;height:36.39px;overflow:hidden"><span class="t" style="left:13.6px;top:2.65px;transform:scaleX(0.8455)">Dauer</span></div>
<div style="left:194.90px;top:732.35px;width:132.40px;height:36.39px;overflow:hidden"><span class="t" style="left:13.6px;top:2.65px;transform:scaleX(0.8218)">Mittelwert</span></div>
<div style="left:194.90px;top:809.13px;width:132.40px;height:36.39px;overflow:hidden"><span class="t" style="left:13.6px;top:2.65px;transform:scaleX(0.8612)">Aufwärmung</span></div>
<div style="left:194.90px;top:847.52px;width:132.40px;height:36.39px;overflow:hidden"><span class="t" style="left:13.6px;top:2.65px;transform:scaleX(0.8149)">Belastung</span></div>
<div style="left:194.90px;top:885.91px;width:132.40px;height:36.39px;overflow:hidden"><span class="t" style="left:13.6px;top:2.65px;transform:scaleX(0.8371)">Erholung</span></div>
<div style="left:194.90px;top:962.69px;width:132.40px;height:35.66px;overflow:hidden"><span class="t" style="left:13.6px;top:2.65px;transform:scaleX(0.8363)">verbr. kJ</span></div>
<span class="t" style="top:581.44px;transform:scaleX(0.8388);left:341.50px;">Ergometer</span>
<span class="t" style="top:619.83px;transform:scaleX(0.825);left:341.50px;">Last</span>
<span class="t r" style="top:658.22px;transform:scaleX(0.847);right:1127.30px;">24:00</span>
<span class="t" style="top:658.22px;transform:scaleX(0.8343);left:437.50px;">min</span>
<span class="t r" style="top:735.00px;transform:scaleX(0.8574);right:1127.30px;">87</span>
<span class="t" style="top:735.00px;transform:scaleX(0.8012);left:437.50px;">Watt</span>
<span class="t r" style="top:811.78px;transform:scaleX(0.8532);right:1127.30px;">83</span>
<span class="t" style="top:811.78px;transform:scaleX(0.8136);left:439.00px;">1/min</span>
<span class="t r" style="top:850.17px;transform:scaleX(0.8405);right:1127.30px;">120</span>
<span class="t" style="top:850.17px;transform:scaleX(0.8136);left:439.00px;">1/min</span>
<span class="t r" style="top:888.56px;transform:scaleX(0.8604);right:1127.30px;">111</span>
<span class="t" style="top:888.56px;transform:scaleX(0.8136);left:439.00px;">1/min</span>
<span class="t r" style="top:965.34px;transform:scaleX(0.8531);right:1127.30px;">537.5</span>
<span class="t" style="top:965.34px;transform:scaleX(0.8122);left:437.50px;">kJoule</span>
<span class="t" style="top:581.44px;transform:scaleX(0.8501);left:707.40px;">Kommentar</span>
<span class="t" style="top:619.83px;transform:scaleX(0.8296);left:707.60px;">Aufwärmphase</span>
<span class="t" style="top:773.39px;transform:scaleX(0.813);left:708.00px;">Training</span>
<span class="t" style="top:888.56px;transform:scaleX(0.8282);left:707.60px;">Erholphase</span>
<span class="t" style="top:619.83px;transform:scaleX(0.825);left:880.30px;">Last</span>
<span class="t r" style="top:619.83px;transform:scaleX(0.8615);right:359.50px;">25</span>
<span class="t" style="top:619.83px;transform:scaleX(0.8012);left:1206.00px;">Watt</span>
<span class="t" style="top:658.22px;transform:scaleX(0.8191);left:880.30px;">Dauer konstante Last</span>
<span class="t r" style="top:658.22px;transform:scaleX(0.8392);right:359.50px;">2:00</span>
<span class="t" style="top:658.22px;transform:scaleX(0.8343);left:1206.00px;">min</span>
<span class="t" style="top:696.61px;transform:scaleX(0.8125);left:880.30px;">Lastanstieg</span>
<span class="t r" style="top:696.61px;transform:scaleX(0.8325);right:359.50px;">0:00</span>
<span class="t" style="top:696.61px;transform:scaleX(0.8343);left:1206.00px;">min</span>
<span class="t" style="top:773.39px;transform:scaleX(0.825);left:880.30px;">Last</span>
<span class="t r" style="top:773.39px;transform:scaleX(0.8236);right:359.50px;">100</span>
<span class="t" style="top:773.39px;transform:scaleX(0.8012);left:1206.00px;">Watt</span>
<span class="t" style="top:811.78px;transform:scaleX(0.8455);left:880.30px;">Dauer</span>
<span class="t r" style="top:811.78px;transform:scaleX(0.8439);right:359.50px;">20:00</span>
<span class="t" style="top:811.78px;transform:scaleX(0.8343);left:1206.00px;">min</span>
<span class="t" style="top:888.56px;transform:scaleX(0.825);left:880.30px;">Last</span>
<span class="t r" style="top:888.56px;transform:scaleX(0.8615);right:359.50px;">25</span>
<span class="t" style="top:888.56px;transform:scaleX(0.8012);left:1206.00px;">Watt</span>
<span class="t" style="top:926.95px;transform:scaleX(0.8243);left:880.30px;">erreicht nach</span>
<span class="t r" style="top:926.95px;transform:scaleX(0.8325);right:359.50px;">0:00</span>
<span class="t" style="top:926.95px;transform:scaleX(0.8343);left:1206.00px;">min</span>
<span class="t" style="top:965.34px;transform:scaleX(0.8191);left:880.30px;">Dauer konstante Last</span>
<span class="t r" style="top:965.34px;transform:scaleX(0.8392);right:359.50px;">2:00</span>
<span class="t" style="top:965.34px;transform:scaleX(0.8343);left:1206.00px;">min</span>
<div style="left:1382.6px;top:883.41px;width:114.5px;height:37.49px;background:#dddddd;"></div>
<div style="left:1382.6px;top:883.41px;width:114.5px;height:1.1px;background:#fbfbfb;"></div>
<div style="left:1382.6px;top:883.41px;width:1.1px;height:37.49px;background:#fbfbfb;"></div>
<div style="left:1382.6px;top:919.6px;width:114.5px;height:1.3px;background:#1c1c1c;"></div>
<div style="left:1495.8px;top:883.41px;width:1.3px;height:37.49px;background:#1c1c1c;"></div>
<span class="t" style="top:888.56px;transform:scaleX(0.8381);left:1400.30px;">PWC</span>
<div style="left:1382.6px;top:921.8px;width:114.5px;height:37.49px;background:#dddddd;"></div>
<div style="left:1382.6px;top:921.8px;width:114.5px;height:1.1px;background:#fbfbfb;"></div>
<div style="left:1382.6px;top:921.8px;width:1.1px;height:37.49px;background:#fbfbfb;"></div>
<div style="left:1382.6px;top:957.99px;width:114.5px;height:1.3px;background:#1c1c1c;"></div>
<div style="left:1495.8px;top:921.8px;width:1.3px;height:37.49px;background:#1c1c1c;"></div>
<span class="t" style="top:926.95px;transform:scaleX(0.8145);left:1400.30px;">TC</span>
<div style="left:1382px;top:961.09px;width:115px;height:37.06px;background:#dddddd;"></div>
<div style="left:1382px;top:997.15px;width:115px;height:1.2px;background:#fbfbfb;"></div>
<div style="left:1496px;top:961.09px;width:1.2px;height:37.06px;background:#fbfbfb;"></div>
<div style="left:1382px;top:961.09px;width:115px;height:1.3px;background:#1c1c1c;"></div>
<div style="left:1382px;top:961.09px;width:1.3px;height:37.06px;background:#1c1c1c;"></div>
<span class="t" style="top:965.34px;transform:scaleX(0.813);left:1400.30px;">Training</span>
<div style="left:58.6px;top:1038px;width:172px;height:37.9px;background:#dddddd;"></div>
<div style="left:58.6px;top:1038px;width:172px;height:1.1px;background:#fbfbfb;"></div>
<div style="left:58.6px;top:1038px;width:1.1px;height:37.9px;background:#fbfbfb;"></div>
<div style="left:58.6px;top:1074.6px;width:172px;height:1.3px;background:#1c1c1c;"></div>
<div style="left:229.3px;top:1038px;width:1.3px;height:37.9px;background:#1c1c1c;"></div>
<span class="t" style="top:1043.05px;transform:scaleX(0.8317);left:75.80px;">Übersicht</span>
<div style="left:474.9px;top:1038px;width:172.3px;height:37.9px;background:#dddddd;"></div>
<div style="left:474.9px;top:1038px;width:172.3px;height:1.1px;background:#fbfbfb;"></div>
<div style="left:474.9px;top:1038px;width:1.1px;height:37.9px;background:#fbfbfb;"></div>
<div style="left:474.9px;top:1074.6px;width:172.3px;height:1.3px;background:#1c1c1c;"></div>
<div style="left:645.9px;top:1038px;width:1.3px;height:37.9px;background:#1c1c1c;"></div>
<span class="t" style="top:1043.05px;transform:scaleX(0.8211);left:492.10px;">&lt;&lt; Training</span>
<div style="left:647.6px;top:1038px;width:172.1px;height:37.9px;background:#dddddd;"></div>
<div style="left:647.6px;top:1038px;width:172.1px;height:1.1px;background:#fbfbfb;"></div>
<div style="left:647.6px;top:1038px;width:1.1px;height:37.9px;background:#fbfbfb;"></div>
<div style="left:647.6px;top:1074.6px;width:172.1px;height:1.3px;background:#1c1c1c;"></div>
<div style="left:818.4px;top:1038px;width:1.3px;height:37.9px;background:#1c1c1c;"></div>
<span class="t" style="top:1043.05px;transform:scaleX(0.786);left:666.00px;">Training &gt;&gt;</span>
<div style="left:891.3px;top:1038px;width:172.7px;height:37.9px;background:#dddddd;"></div>
<div style="left:891.3px;top:1038px;width:172.7px;height:1.1px;background:#fbfbfb;"></div>
<div style="left:891.3px;top:1038px;width:1.1px;height:37.9px;background:#fbfbfb;"></div>
<div style="left:891.3px;top:1074.6px;width:172.7px;height:1.3px;background:#1c1c1c;"></div>
<div style="left:1062.7px;top:1038px;width:1.3px;height:37.9px;background:#1c1c1c;"></div>
<span class="t" style="top:1043.05px;transform:scaleX(0.8314);left:908.50px;">Optionen</span>
<div style="left:1135px;top:1038px;width:172.3px;height:37.9px;background:#dddddd;"></div>
<div style="left:1135px;top:1038px;width:172.3px;height:1.1px;background:#fbfbfb;"></div>
<div style="left:1135px;top:1038px;width:1.1px;height:37.9px;background:#fbfbfb;"></div>
<div style="left:1135px;top:1074.6px;width:172.3px;height:1.3px;background:#1c1c1c;"></div>
<div style="left:1306px;top:1038px;width:1.3px;height:37.9px;background:#1c1c1c;"></div>
<span class="t" style="top:1043.05px;transform:scaleX(0.8274);left:1152.20px;">Drucken</span>
<div style="left:1307.7px;top:1038px;width:172.3px;height:37.9px;background:#dddddd;"></div>
<div style="left:1307.7px;top:1038px;width:172.3px;height:1.1px;background:#fbfbfb;"></div>
<div style="left:1307.7px;top:1038px;width:1.1px;height:37.9px;background:#fbfbfb;"></div>
<div style="left:1307.7px;top:1074.6px;width:172.3px;height:1.3px;background:#1c1c1c;"></div>
<div style="left:1478.7px;top:1038px;width:1.3px;height:37.9px;background:#1c1c1c;"></div>
<span class="t" style="top:1043.05px;transform:scaleX(0.837);left:1324.90px;">Beenden</span>
<svg width="1535" height="1152" viewBox="0 0 1535 1152" style="left:0;top:0;pointer-events:none"><polygon points="431.6,524.9 452.2,524.9 441.9,514.4" fill="#0a0a0a"/><polygon points="469.8,514.6 490.4,514.6 480.1,525.2" fill="#0a0a0a"/><polygon points="525.2,508.8 525.2,529.4 513.9,519.1" fill="#0a0a0a"/><polygon points="552.0,508.8 552.0,529.4 563.2,519.1" fill="#0a0a0a"/><polygon points="545.9,602.1 566.1,602.1 556.0,591.3" fill="#0a0a0a"/><polygon points="545.9,974.6 566.1,974.6 556.0,985.4" fill="#0a0a0a"/><polygon points="1042.8,1054.3 1055.6,1054.3 1049.2,1047.5" fill="#0a0a0a"/></svg>
<div style="left:0px;top:0px;width:1535px;height:1px;background:#3a3a3a;"></div>
<div style="left:1px;top:1px;width:384px;height:1px;background:#f0f0f0;"></div>
<div style="left:0px;top:0px;width:1.1px;height:1152px;background:#3a3a3a;"></div>
<div style="left:1.1px;top:1px;width:1px;height:1151px;background:#f0f0f0;"></div>
<div style="left:2px;top:1150.8px;width:1533px;height:1.2px;background:#cbcbc8;"></div>
<div style="left:1533.8px;top:116px;width:1.2px;height:1036px;background:#cdcdcd;"></div>


</div></body></html>
